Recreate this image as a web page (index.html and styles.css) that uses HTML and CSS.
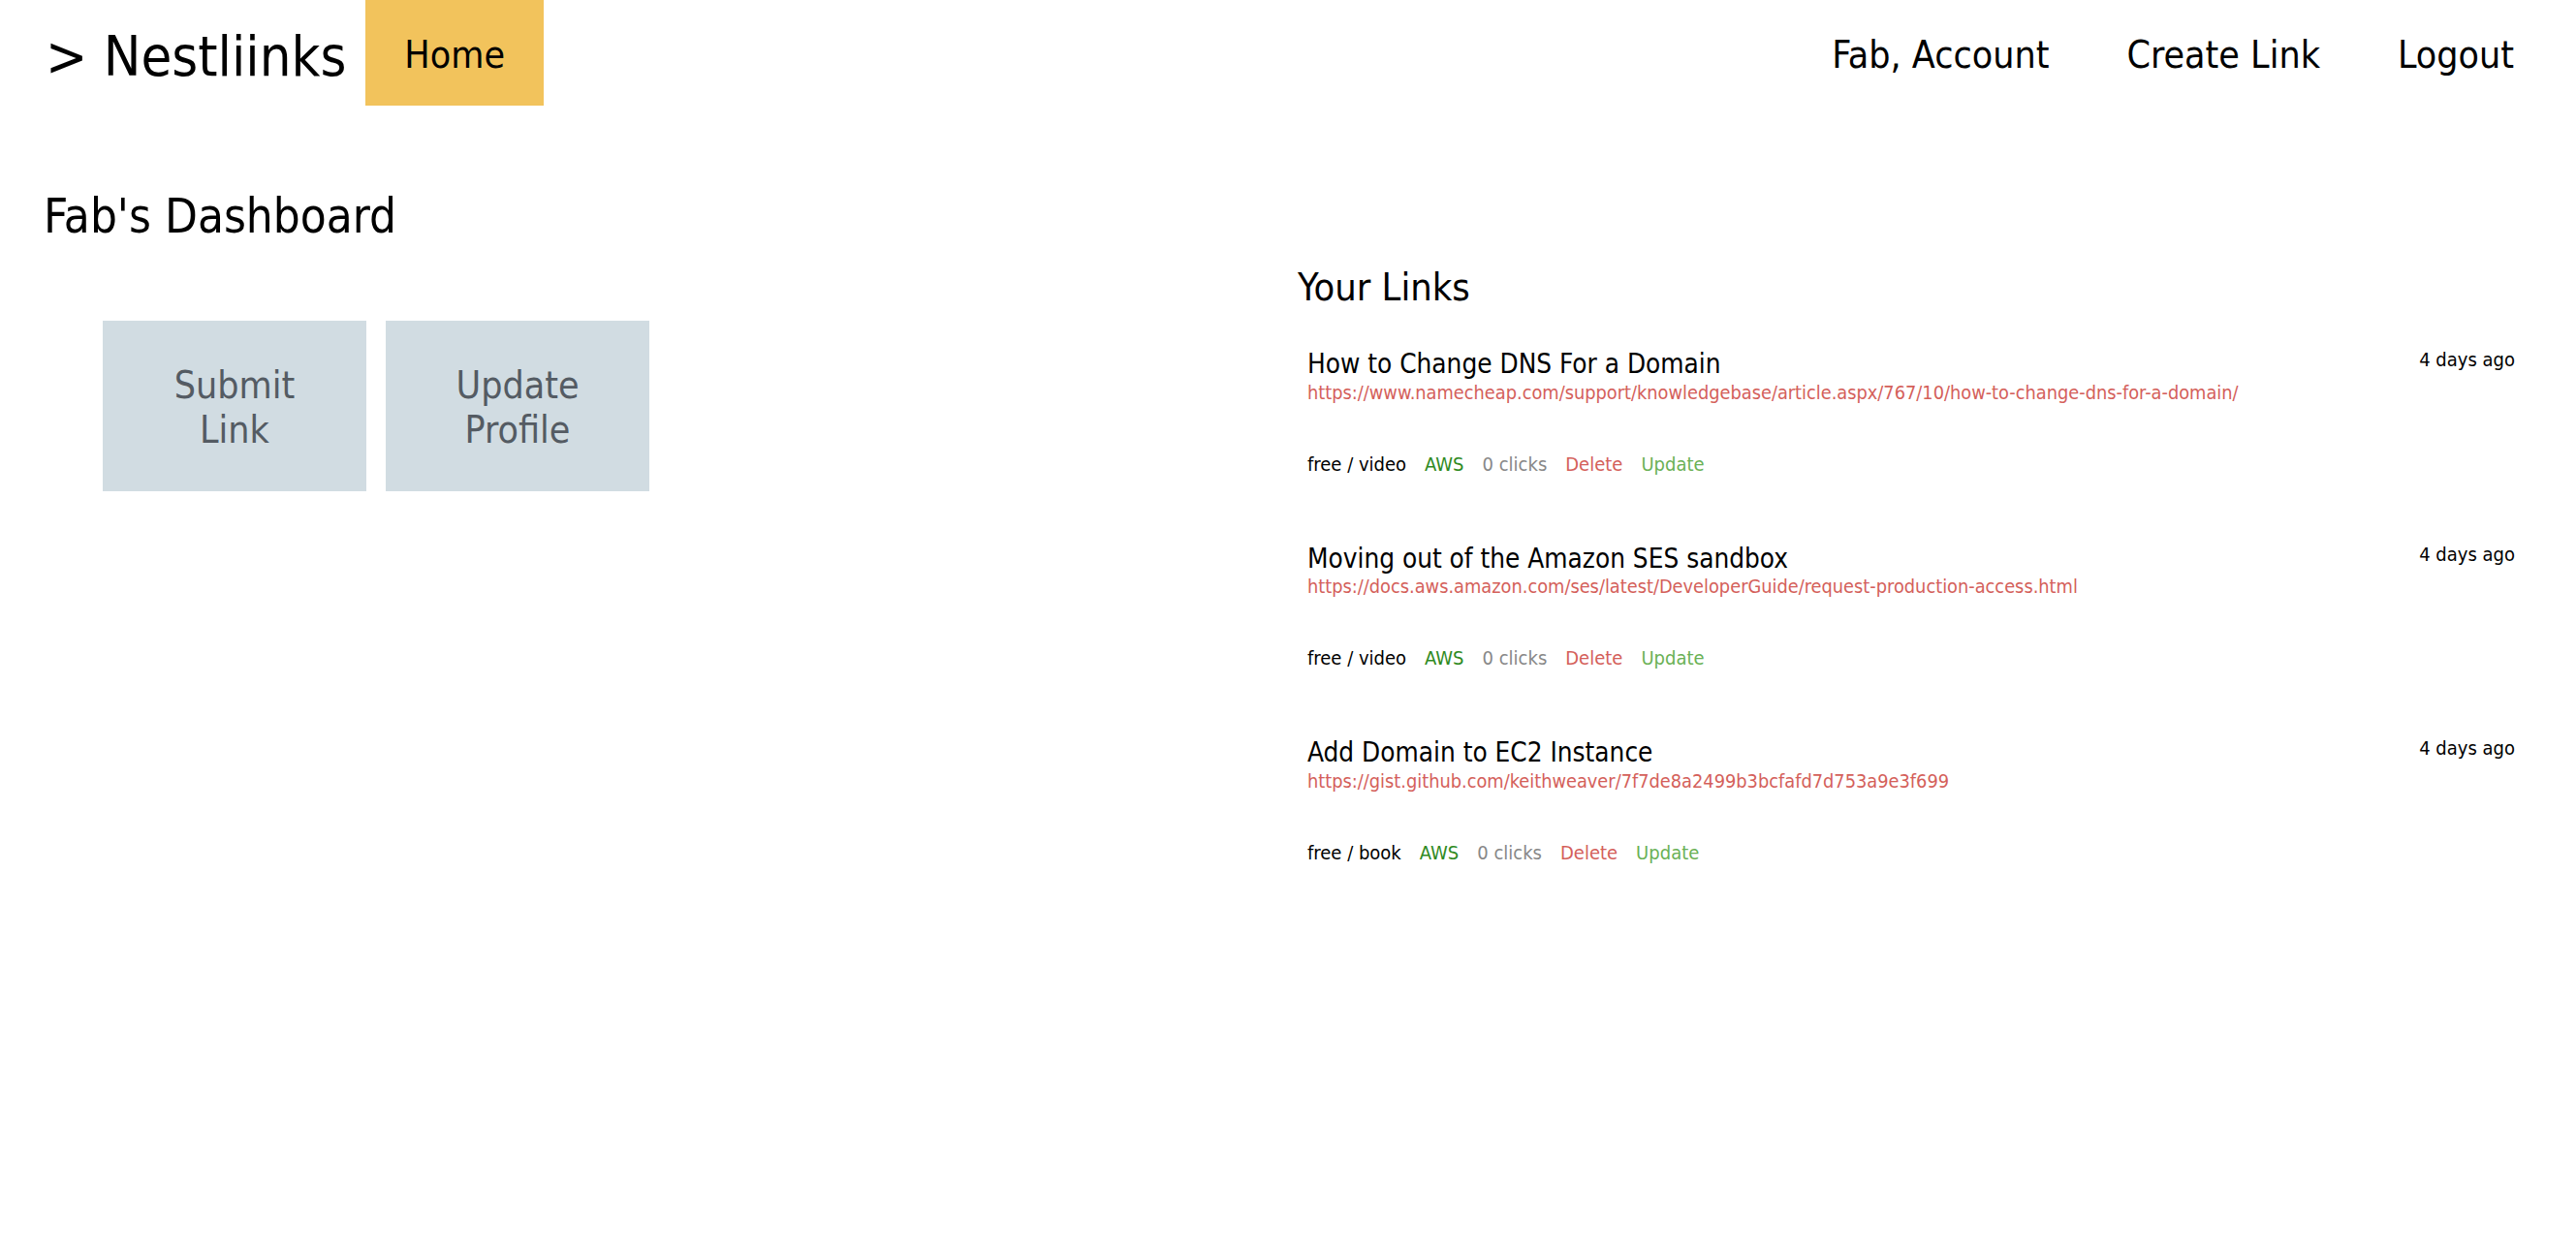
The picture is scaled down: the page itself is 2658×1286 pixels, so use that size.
FILE: index.html
```html
<!DOCTYPE html>
<html lang="en">
<head>
<meta charset="utf-8">
<title>Nestliinks - Dashboard</title>
<link rel="stylesheet" href="styles.css">
</head>
<body>
<header class="topbar">
  <div class="brand">&gt; Nestliinks</div>
  <a class="nav-item nav-active" href="#">Home</a>
  <nav class="nav-right">
    <a class="nav-item" href="#">Fab, Account</a>
    <a class="nav-item" href="#">Create Link</a>
    <a class="nav-item" href="#">Logout</a>
  </nav>
</header>
<main class="page">
  <section class="left-col">
    <h1 class="dash-title">Fab's Dashboard</h1>
    <div class="actions">
      <a class="action-btn" href="#">Submit<br>Link</a>
      <a class="action-btn" href="#">Update<br>Profile</a>
    </div>
  </section>
  <section class="right-col">
    <h2 class="links-title">Your Links</h2>
    <div class="link-item">
      <div class="link-head">
        <div class="link-main">
          <div class="link-title">How to Change DNS For a Domain</div>
          <div class="link-url">https://www.namecheap.com/support/knowledgebase/article.aspx/767/10/how-to-change-dns-for-a-domain/</div>
        </div>
        <div class="link-date">4 days ago</div>
      </div>
      <div class="link-meta">
        <span class="meta-type">free / video</span>
        <span class="meta-cat">AWS</span>
        <span class="meta-clicks">0 clicks</span>
        <span class="meta-delete">Delete</span>
        <span class="meta-update">Update</span>
      </div>
    </div>
    <div class="link-item">
      <div class="link-head">
        <div class="link-main">
          <div class="link-title">Moving out of the Amazon SES sandbox</div>
          <div class="link-url">https://docs.aws.amazon.com/ses/latest/DeveloperGuide/request-production-access.html</div>
        </div>
        <div class="link-date">4 days ago</div>
      </div>
      <div class="link-meta">
        <span class="meta-type">free / video</span>
        <span class="meta-cat">AWS</span>
        <span class="meta-clicks">0 clicks</span>
        <span class="meta-delete">Delete</span>
        <span class="meta-update">Update</span>
      </div>
    </div>
    <div class="link-item">
      <div class="link-head">
        <div class="link-main">
          <div class="link-title">Add Domain to EC2 Instance</div>
          <div class="link-url">https://gist.github.com/keithweaver/7f7de8a2499b3bcfafd7d753a9e3f699</div>
        </div>
        <div class="link-date">4 days ago</div>
      </div>
      <div class="link-meta">
        <span class="meta-type">free / book</span>
        <span class="meta-cat">AWS</span>
        <span class="meta-clicks">0 clicks</span>
        <span class="meta-delete">Delete</span>
        <span class="meta-update">Update</span>
      </div>
    </div>
  </section>
</main>
</body>
</html>
```

FILE: styles.css
```css
* { box-sizing: border-box; }

html, body {
  margin: 0;
  padding: 0;
  background: #ffffff;
  color: #000000;
  font-family: "DejaVu Sans Condensed", "DejaVu Sans", sans-serif;
}

a { color: inherit; text-decoration: none; }

.topbar {
  display: flex;
  align-items: flex-start;
  height: 109px;
  padding: 0 24px 0 47px;
}

.brand {
  font-size: 57.5px;
  line-height: 1;
  padding-top: 30px;
  margin-right: 20px;
  white-space: nowrap;
}

.nav-item {
  display: block;
  font-size: 39px;
  height: 109px;
  line-height: 105px;
  padding: 4px 40px 0;
  white-space: nowrap;
}

.nav-active {
  background: #f2c35c;
}

.nav-right {
  display: flex;
  margin-left: auto;
}

.page {
  display: grid;
  grid-template-columns: 1294px 1fr;
  padding: 0 63px 0 45px;
}

.left-col {
  padding-top: 86px;
}

.dash-title {
  margin: 0;
  font-size: 49px;
  font-weight: normal;
  line-height: 1.2;
}

.actions {
  display: flex;
  gap: 20px;
  margin: 77px 0 0 61px;
}

.action-btn {
  display: flex;
  align-items: center;
  justify-content: center;
  width: 272px;
  height: 176px;
  background: #d1dce2;
  color: #545b63;
  font-size: 39px;
  line-height: 46px;
  text-align: center;
  padding-top: 4px;
}

.right-col {
  padding-top: 164px;
}

.links-title {
  margin: 0 0 38px;
  font-size: 39.5px;
  font-weight: normal;
  line-height: 1.2;
}

.link-item {
  padding-left: 10px;
  margin-bottom: 68px;
}

.link-head {
  display: flex;
  justify-content: space-between;
  align-items: flex-start;
}

.link-main {
  margin-top: 3px;
}

.link-title {
  font-size: 27.7px;
  line-height: 1.1;
}

.link-url {
  margin-top: 4px;
  font-size: 19.8px;
  line-height: 20px;
  color: #d4605a;
}

.link-date {
  margin-top: 1px;
  font-size: 20px;
  line-height: 24px;
  white-space: nowrap;
}

.link-meta {
  display: flex;
  gap: 19px;
  margin-top: 51px;
  font-size: 20px;
  line-height: 24px;
}

.meta-type { color: #000000; }
.meta-cat { color: #2f8a22; }
.meta-clicks { color: #888888; }
.meta-delete { color: #d4605a; }
.meta-update { color: #6ab155; }
```
